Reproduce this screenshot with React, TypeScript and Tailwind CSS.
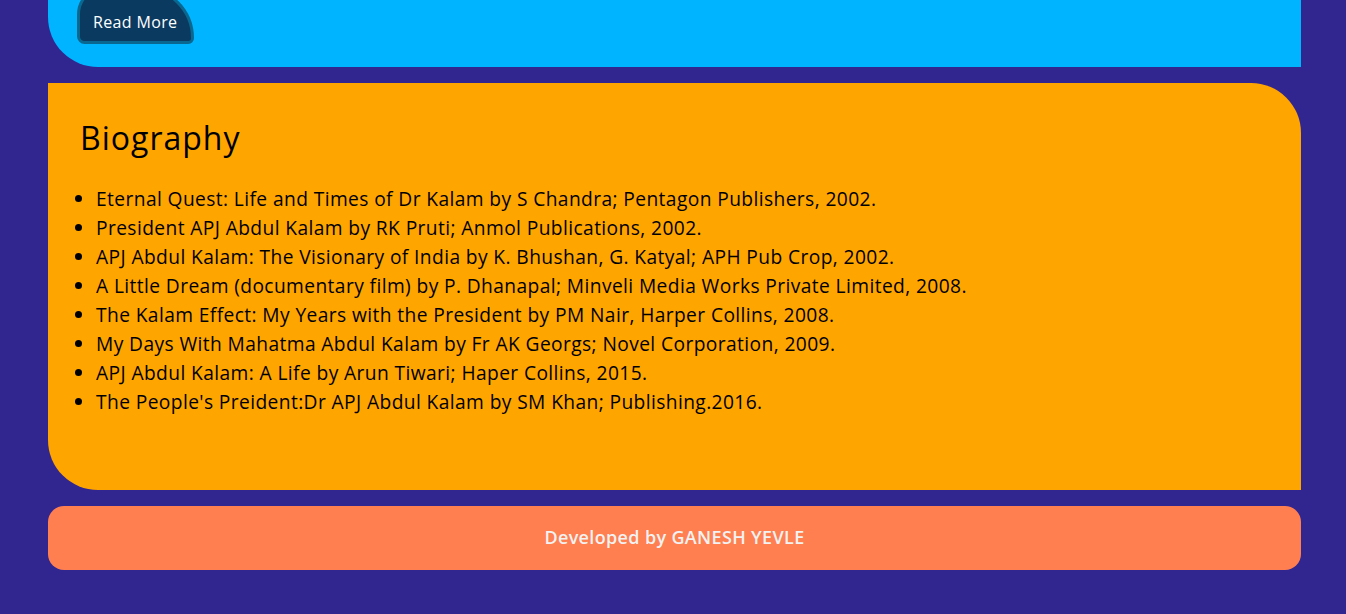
import React from "react"

const books: string[] = [
    "Eternal Quest: Life and Times of Dr Kalam by S Chandra; Pentagon Publishers, 2002.",
    "President APJ Abdul Kalam by RK Pruti; Anmol Publications, 2002.",
    "APJ Abdul Kalam: The Visionary of India by K. Bhushan, G. Katyal; APH Pub Crop, 2002.",
    "A Little Dream (documentary film) by P. Dhanapal; Minveli Media Works Private Limited, 2008.",
    "The Kalam Effect: My Years with the President by PM Nair, Harper Collins, 2008.",
    "My Days With Mahatma Abdul Kalam by Fr AK Georgs; Novel Corporation, 2009.",
    "APJ Abdul Kalam: A Life by Arun Tiwari; Haper Collins, 2015.",
    "The People's Preident:Dr APJ Abdul Kalam by SM Khan; Publishing.2016.",
]

export default function App() {
    return (
        <div className="min-h-[614px] bg-[#312590] pl-[48px] pr-[45px] pb-[44px] font-['Open_Sans',sans-serif] overflow-hidden">
            {/* tail of the previous card */}
            <section className="h-[67px] bg-[#00b4ff] rounded-bl-[50px] pl-[29px]">
                <button type="button" className="-mt-[14px] h-[58px] w-[117px] pt-[14px] pl-[13px] text-left bg-[#0a3a5f] border-[3px] border-[#0a6790] rounded-tl-[30px] rounded-tr-[55px] rounded-br-[6px] rounded-bl-[8px] text-white text-[16px] tracking-[0.35px] leading-none">
                    Read More
                </button>
            </section>

            <section className="mt-[16px] h-[407px] bg-[#ffa500] rounded-tr-[50px] rounded-bl-[50px] px-[32px] pt-[31px]">
                <h2 className="text-[32px] leading-[48px] tracking-[1px] text-black">Biography</h2>
                <ul className="mt-[22px] pl-[16px] list-disc text-[19.2px] leading-[29px] tracking-[0.4px] text-black">
                    {books.map(b => <li key={b}>{b}</li>)}
                </ul>
            </section>

            <footer className="mt-[16px] h-[64px] bg-[#ff7f50] rounded-[16px] flex items-center justify-center">
                <p className="-mt-[2px] text-[18px] font-semibold tracking-[0.35px] text-[#f2f2f2]">Developed by GANESH YEVLE</p>
            </footer>
        </div>
    )
}
